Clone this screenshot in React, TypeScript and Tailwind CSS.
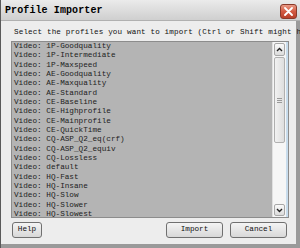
const PROFILES = [
  '1P-Goodquality',
  '1P-Intermediate',
  '1P-Maxspeed',
  'AE-Goodquality',
  'AE-Maxquality',
  'AE-Standard',
  'CE-Baseline',
  'CE-Highprofile',
  'CE-Mainprofile',
  'CE-QuickTime',
  'CQ-ASP_Q2_eq(crf)',
  'CQ-ASP_Q2_equiv',
  'CQ-Lossless',
  'default',
  'HQ-Fast',
  'HQ-Insane',
  'HQ-Slow',
  'HQ-Slower',
  'HQ-Slowest',
];

const mono = { fontFamily: '"Liberation Mono", "DejaVu Sans Mono", monospace' };

export default function App() {
  return (
    <div
      className="w-[300px] h-[248px] overflow-hidden flex flex-col bg-[#9a9a9a] border-l border-[#5a5a5a]"
      style={mono}
    >
      {/* title bar */}
      <div className="h-[21px] flex items-center justify-between bg-gradient-to-b from-[#ebebeb] to-[#cfcfcf] pl-[4px] pr-[3px] border-b border-[#b0b0b0]">
        <span className="text-[10px] font-bold text-black tracking-[0.1px]">Profile Importer</span>
        <div className="w-[17px] h-[15px] mt-[2px] rounded-[3px] border border-[#8a3a2a] bg-gradient-to-b from-[#e89a86] via-[#d35a42] to-[#b8402a] flex items-center justify-center">
          <svg width="9" height="9" viewBox="0 0 9 9">
            <path d="M1 1 L8 8 M8 1 L1 8" stroke="white" strokeWidth="1.8" strokeLinecap="round" />
          </svg>
        </div>
      </div>

      {/* body */}
      <div className="flex-1 flex flex-col bg-[#ededed] mr-[4px] mb-[4px] pl-[10px] pr-[7px]">
        <div className="h-[20px] pt-[7px] mr-[-11px] text-[7.6px] leading-[9px] tracking-[0.15px] text-[#111] whitespace-nowrap overflow-hidden pl-[3px]">
          Select the profiles you want to import (Ctrl or Shift might h
        </div>

        <div className="h-[177px] flex border border-[#8c8c8c] bg-[#b4b4b4]">
          <div className="flex-1 pl-[2px] overflow-hidden">
            {PROFILES.map((p) => (
              <div key={p} className="h-[9.33px] text-[7.7px] leading-[9.33px] text-[#222] whitespace-nowrap">
                Video: {p}
              </div>
            ))}
          </div>
          {/* scrollbar */}
          <div className="w-[14px] flex flex-col bg-[#f6f6f6] border-l border-[#e0e0e0]">
            <div className="h-[13px] mx-[1px] mt-[1px] rounded-[2px] border border-[#a8a8a8] bg-gradient-to-b from-[#fafafa] to-[#dcdcdc] flex items-center justify-center">
              <svg width="7" height="5" viewBox="0 0 7 5">
                <path d="M1 4 L3.5 1.5 L6 4" stroke="#222" strokeWidth="1.4" fill="none" />
              </svg>
            </div>
            <div className="h-[86px] mx-[1px] mt-[1px] rounded-[2px] border border-[#b0b0b0] bg-gradient-to-r from-[#f2f2f2] to-[#dedede] flex items-center justify-center">
              <div className="flex flex-col gap-[1px]">
                <div className="w-[5px] h-[1px] bg-[#9a9a9a]" />
                <div className="w-[5px] h-[1px] bg-[#9a9a9a]" />
                <div className="w-[5px] h-[1px] bg-[#9a9a9a]" />
              </div>
            </div>
            <div className="flex-1" />
            <div className="h-[12px] mx-[1px] mb-[1px] rounded-[2px] border border-[#a8a8a8] bg-gradient-to-b from-[#fafafa] to-[#dcdcdc] flex items-center justify-center">
              <svg width="7" height="5" viewBox="0 0 7 5">
                <path d="M1 1 L3.5 3.5 L6 1" stroke="#222" strokeWidth="1.4" fill="none" />
              </svg>
            </div>
          </div>
          <div className="w-[2px] bg-[#c8dcec]" />
        </div>

        <div className="flex items-start mt-[4px] pl-[1px] pr-[2px]">
          <Btn label="Help" w="w-[30px]" />
          <div className="flex-1" />
          <Btn label="Import" w="w-[57px]" />
          <div className="w-[7px]" />
          <Btn label="Cancel" w="w-[57px]" />
        </div>
      </div>
    </div>
  );
}

function Btn({ label, w }: { label: string; w: string }) {
  return (
    <div
      className={`${w} h-[16px] rounded-[3px] border border-[#707070] bg-gradient-to-b from-[#f4f4f4] to-[#d8d8d8] flex items-center justify-center text-[7.7px] text-[#111]`}
    >
      {label}
    </div>
  );
}
